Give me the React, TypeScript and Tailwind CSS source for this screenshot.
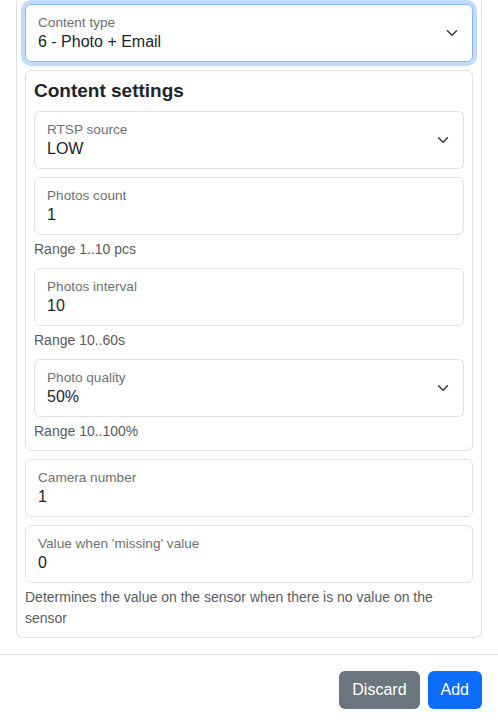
import type { ReactNode } from "react";

type FieldProps = {
  label: string;
  value: string;
  select?: boolean;
  focused?: boolean;
};

function Chevron() {
  return (
    <svg className="w-3 h-3 shrink-0 mr-[2px]" viewBox="0 0 16 16" fill="none">
      <path d="m2 5 6 6 6-6" stroke="#343a40" strokeWidth={2} strokeLinecap="round" strokeLinejoin="round" />
    </svg>
  );
}

function Field({ label, value, select, focused }: FieldProps) {
  return (
    <div
      className={`h-[58px] rounded-md border bg-white flex items-center px-3 ${
        focused
          ? "border-[#86b7fe] shadow-[0_0_0_4px_rgba(13,110,253,0.25)]"
          : "border-[#dee2e6]"
      }`}
    >
      <div className="flex-1 min-w-0 pt-[1px]">
        <div className="text-[13.6px] leading-[18px] text-[#6f7174] translate-y-[1px]">{label}</div>
        <div className="text-base leading-6 text-[#212529] -translate-y-[1px]">{value}</div>
      </div>
      {select && <Chevron />}
    </div>
  );
}

function Hint({ children }: { children: ReactNode }) {
  return <div className="mt-1 text-sm leading-[21px] text-[#595c5f]">{children}</div>;
}

export default function App() {
  return (
    <div className="w-[498px] h-[725px] bg-white overflow-hidden font-['Liberation_Sans',Arial,sans-serif] text-[#212529]">
      <div className="px-4 pb-4">
        <div className="border border-t-0 border-[#dfe1e3] rounded-b-md px-2 pt-1 pb-2">
          <div className="mb-2">
            <Field label="Content type" value="6 - Photo + Email" select focused />
          </div>

          <div className="mb-2 border border-[#dfe1e3] rounded-md p-2">
            <h5 className="text-[19px] leading-6 font-bold mb-2">Content settings</h5>
            <div className="mb-2">
              <Field label="RTSP source" value="LOW" select />
            </div>
            <div className="mb-2">
              <Field label="Photos count" value="1" />
              <Hint>Range 1..10 pcs</Hint>
            </div>
            <div className="mb-2">
              <Field label="Photos interval" value="10" />
              <Hint>Range 10..60s</Hint>
            </div>
            <div>
              <Field label="Photo quality" value="50%" select />
              <Hint>Range 10..100%</Hint>
            </div>
          </div>

          <div className="mb-2">
            <Field label="Camera number" value="1" />
          </div>
          <div>
            <Field label="Value when 'missing' value" value="0" />
            <Hint>Determines the value on the sensor when there is no value on the sensor</Hint>
          </div>
        </div>
      </div>

      <div className="border-t border-[#dee2e6] flex justify-end gap-2 p-4">
        <button className="h-[38px] px-[13px] rounded-md bg-[#6c757d] text-white text-base">Discard</button>
        <button className="h-[38px] px-[13px] rounded-md bg-[#0d6efd] text-white text-base">Add</button>
      </div>
    </div>
  );
}
